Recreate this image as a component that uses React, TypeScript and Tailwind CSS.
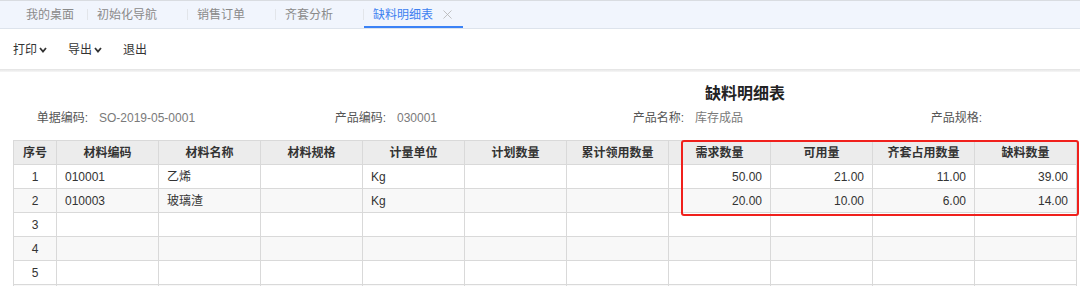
import { X } from 'lucide-react';

const tabs = ['我的桌面', '初始化导航', '销售订单', '齐套分析', '缺料明细表'];

const columns = [
  '序号',
  '材料编码',
  '材料名称',
  '材料规格',
  '计量单位',
  '计划数量',
  '累计领用数量',
  '需求数量',
  '可用量',
  '齐套占用数量',
  '缺料数量',
];

interface Row {
  code: string;
  name: string;
  unit: string;
  need: string;
  available: string;
  occupied: string;
  shortage: string;
}

const rows: Row[] = [
  { code: '010001', name: '乙烯', unit: 'Kg', need: '50.00', available: '21.00', occupied: '11.00', shortage: '39.00' },
  { code: '010003', name: '玻璃渣', unit: 'Kg', need: '20.00', available: '10.00', occupied: '6.00', shortage: '14.00' },
];

const font = { fontFamily: '"Liberation Sans", "Noto Sans CJK SC", Arial, sans-serif' };

function Caret() {
  return (
    <svg width="8" height="6" viewBox="0 0 8 6" className="ml-[2px]">
      <polyline points="1,1 4,4.5 7,1" fill="none" stroke="currentColor" strokeWidth="1.8" />
    </svg>
  );
}

function TabBar() {
  return (
    <div className="border-t border-b border-t-[#d9dce1] border-b-[#dde3ec] bg-[#f1f5fd]">
      <div className="flex h-[27px] items-stretch pl-[17px] text-[12px] text-[#8a8a8a]">
        {tabs.map((tab, i) => {
          const active = i === tabs.length - 1;
          return (
            <div key={tab} className="flex items-stretch">
              {i > 0 && <div className="my-[8px] w-px bg-[#e2e5ea]" />}
              <div
                className={`flex items-center border-b-2 pl-[9px] pt-[2px] ${
                  active ? 'border-[#3b82f6] text-[#3d7ff0]' : 'border-transparent'
                } ${i === 0 ? 'pr-[13px]' : 'pr-[8px]'}`}
              >
                <span>{tab}</span>
                {i > 0 && (
                  <X
                    size={15}
                    strokeWidth={1.3}
                    className={`ml-[7px] ${active ? 'text-[#b4b4b4]' : 'invisible'}`}
                  />
                )}
              </div>
            </div>
          );
        })}
      </div>
    </div>
  );
}

function Toolbar() {
  return (
    <div className="flex h-[40px] items-center pl-[13px] pt-[2px] text-[12px] text-[#333]">
      <button type="button" className="flex items-center">
        打印
        <Caret />
      </button>
      <button type="button" className="ml-[21px] flex items-center">
        导出
        <Caret />
      </button>
      <button type="button" className="ml-[21px]">退出</button>
    </div>
  );
}

function InfoField({ label, value, last }: { label: string; value?: string; last?: boolean }) {
  return (
    <div className={`flex items-center ${last ? 'flex-1' : 'w-[298px] shrink-0'}`}>
      <span className="w-[75px] shrink-0 text-right text-[#555]">{label}</span>
      <span className="ml-[11px] text-[#7a7a7a]">{value}</span>
    </div>
  );
}

export default function App() {
  const blankRows = [3, 4, 5, 6, 7];
  const cell = 'h-[24px] border border-[#d9d9d9] px-[8px]';

  return (
    <div className="h-[286px] w-[1080px] overflow-hidden bg-white" style={font}>
      <TabBar />
      <Toolbar />
      <div className="h-[3px] bg-gradient-to-b from-[#e3e3e3] to-[#f6f6f6]" />

      <div className="ml-[13px] w-[1464px]">
        <h1 className="mt-[10px] h-[24px] text-center text-[16px] font-bold leading-[24px] text-[#222]">
          缺料明细表
        </h1>
        <div className="mt-[2px] flex h-[20px] text-[12px]">
          <InfoField label="单据编码:" value="SO-2019-05-0001" />
          <InfoField label="产品编码:" value="030001" />
          <InfoField label="产品名称:" value="库存成品" />
          <InfoField label="产品规格:" last />
        </div>

        <div className="relative mt-[12px] w-[1064px]">
          <table className="w-[1064px] table-fixed border-collapse text-[12px] text-[#333]">
            <colgroup>
              <col className="w-[43px]" />
              {columns.slice(1).map((c) => (
                <col key={c} className="w-[102px]" />
              ))}
            </colgroup>
            <thead>
              <tr className="bg-[#ececec]">
                {columns.map((c) => (
                  <th key={c} className={`${cell} text-center font-bold`}>
                    {c}
                  </th>
                ))}
              </tr>
            </thead>
            <tbody>
              {rows.map((r, i) => (
                <tr key={r.code} className={i % 2 === 1 ? 'bg-[#f8f8f8]' : 'bg-white'}>
                  <td className={`${cell} text-center`}>{i + 1}</td>
                  <td className={cell}>{r.code}</td>
                  <td className={cell}>{r.name}</td>
                  <td className={cell} />
                  <td className={cell}>{r.unit}</td>
                  <td className={cell} />
                  <td className={cell} />
                  <td className={`${cell} text-right`}>{r.need}</td>
                  <td className={`${cell} text-right`}>{r.available}</td>
                  <td className={`${cell} text-right`}>{r.occupied}</td>
                  <td className={`${cell} text-right`}>{r.shortage}</td>
                </tr>
              ))}
              {blankRows.map((n) => (
                <tr key={n} className={n % 2 === 0 ? 'bg-[#f8f8f8]' : 'bg-white'}>
                  <td className={`${cell} text-center`}>{n <= 5 ? n : ''}</td>
                  {columns.slice(1).map((c) => (
                    <td key={c} className={cell} />
                  ))}
                </tr>
              ))}
            </tbody>
          </table>
          {/* highlight box over the quantity columns */}
          <div className="pointer-events-none absolute left-[668px] top-0 h-[76px] w-[398px] rounded-[3px] border-2 border-[#f0201c]" />
        </div>
      </div>
    </div>
  );
}
